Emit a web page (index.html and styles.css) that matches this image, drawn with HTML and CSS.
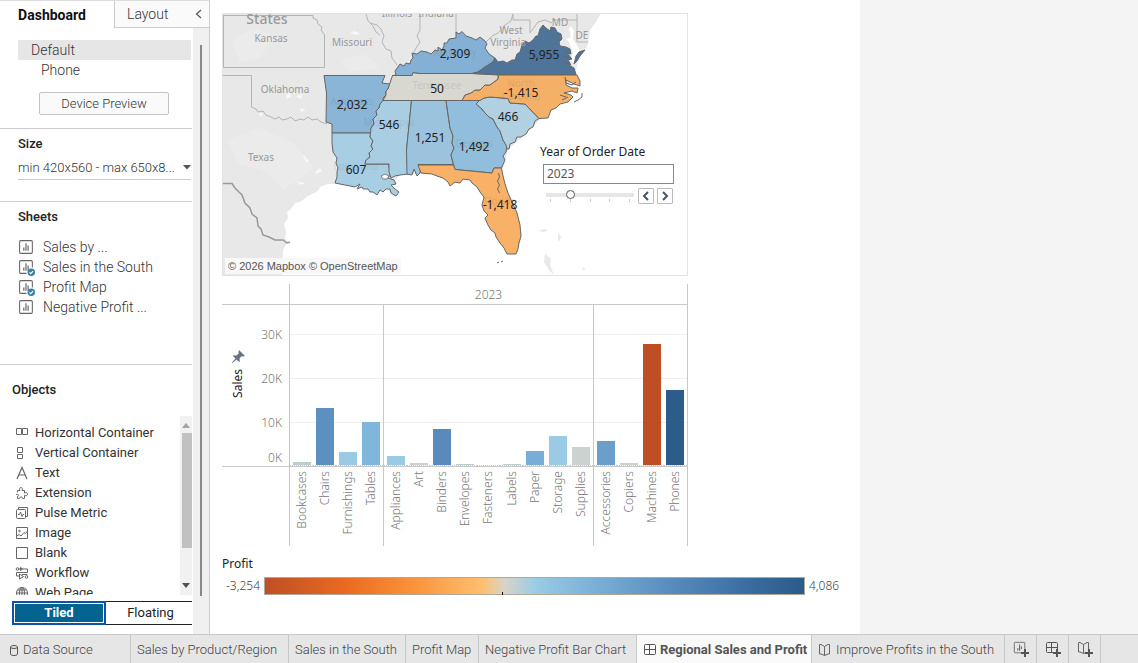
FILE: index.html
```html
<!DOCTYPE html>
<html lang="en">
<head>
  <meta charset="UTF-8">
  <meta name="viewport" content="width=device-width, initial-scale=1.0">
  <title>Regional Sales and Profit</title>
  <link rel="stylesheet" href="styles.css">
</head>
<body>
  <!-- shared icons -->
  <svg class="sprite" aria-hidden="true">
    <symbol id="i-sheet" viewBox="0 0 16 16">
      <rect x="1.5" y="1.5" width="12" height="12" rx="1" fill="none" stroke="#666"/>
      <path d="M5.5 11V8M7.5 11V4M9.5 11V6" stroke="#555" fill="none"/>
    </symbol>
    <symbol id="i-used" viewBox="0 0 16 16">
      <path d="M8 13.5H2.5a1 1 0 0 1-1-1v-10a1 1 0 0 1 1-1h10a1 1 0 0 1 1 1V8" fill="none" stroke="#666"/>
      <path d="M5.5 11V8M7.5 11V4M9.5 11V6" stroke="#555" fill="none"/>
      <circle cx="12.500" cy="12.500" r="3.500" fill="#3a81a6"/>
      <path d="M10.800 12.600l1.200 1.200 2.200-2.400" stroke="#fff" fill="none"/>
    </symbol>
    <symbol id="i-dash" viewBox="0 0 14 14">
      <rect x="1.5" y="1.5" width="11" height="10" rx="1" fill="none" stroke="#555"/>
      <path d="M6.5 1.5v10M1.5 6.5h11" stroke="#555" fill="none"/>
    </symbol>
    <symbol id="i-story" viewBox="0 0 14 14">
      <path d="M6.500 3.500L3 1.500H1.500v9.500H3l3.500 1.500 3.500-1.500h1.500V1.500H10L6.500 3.500v9" fill="none" stroke="#666"/>
    </symbol>
    <symbol id="i-plus" viewBox="0 0 8 8">
      <path d="M4 0v8M0 4h8" stroke="#555" stroke-width="2" fill="none"/>
    </symbol>
  </svg>

  <main class="workspace">
    <aside class="sidebar">
      <nav class="side-tabs">
        <button class="side-tab active" type="button">Dashboard</button>
        <div class="side-tab-rest">
          <button class="side-tab" type="button">Layout</button>
          <button class="collapse" type="button" aria-label="Collapse pane">
            <svg width="7" height="10" viewBox="0 0 7 10"><path d="M6 1L1.500 5 6 9" fill="none" stroke="#555" stroke-width="1.200"/></svg>
          </button>
        </div>
      </nav>
      <div class="side-body">
        <div class="side-content">
          <section class="devices">
            <a class="device selected" href="#default">Default</a>
            <a class="device phone" href="#phone">Phone</a>
            <button class="preview" type="button">Device Preview</button>
          </section>
          <section class="size">
            <label class="side-title" for="size">Size</label>
            <div class="size-field">
              <select id="size">
                <option>min 420x560 - max 650x8...</option>
              </select>
              <svg width="8" height="5" viewBox="0 0 8 5"><path d="M0 0h8L4 4.500z" fill="#555"/></svg>
            </div>
          </section>
          <section class="sheets">
            <h2 class="side-title">Sheets</h2>
            <ul>
              <li><svg><use href="#i-sheet"/></svg>Sales by ...</li>
              <li><svg><use href="#i-used"/></svg>Sales in the South</li>
              <li><svg><use href="#i-used"/></svg>Profit Map</li>
              <li><svg><use href="#i-sheet"/></svg>Negative Profit ...</li>
            </ul>
          </section>
          <section class="objects">
            <h2 class="side-title">Objects</h2>
            <div class="object-box">
              <ul>
                <li><svg viewBox="0 0 14 14"><path d="M1.500 2.500h5v6h-5zM7.500 2.500h5v6h-5z"/></svg>Horizontal Container</li>
                <li><svg viewBox="0 0 14 14"><path d="M2.500 1.500h5v5h-5zM2.500 8.500h5v4h-5z"/></svg>Vertical Container</li>
                <li><svg viewBox="0 0 14 14"><path d="M2 13L7 1.500 12 13M4 9h6" stroke-width="1.200"/></svg>Text</li>
                <li><svg viewBox="0 0 14 14"><path d="M2.500 6.500V4.500H5C4 2.500 5 1.500 6 1.500s2 1 1 3h2.500V7c2-1 3 0 3 1.200s-1 2-3 1.200v3H7.500c0-2-3-2-3 0h-2v-2c1.500 0 1.500-2 0-2H1"/></svg>Extension</li>
                <li><svg viewBox="0 0 14 14"><path d="M3.500 3V1.500h9v9H11"/><rect x="1.500" y="3.500" width="9" height="9" rx="1"/><path d="M3 8.500h1.500L5.500 6l1.500 4.500 1-2h1"/></svg>Pulse Metric</li>
                <li><svg viewBox="0 0 14 14"><path d="M1.500 1.500h11v11h-11zM2 10l2-1.500 2 1.500 3-3.500 1.500 1L12.500 5"/><circle cx="4.500" cy="5" r=".8"/></svg>Image</li>
                <li><svg viewBox="0 0 14 14"><path d="M1.500 1.500h11v11h-11z"/></svg>Blank</li>
                <li><svg viewBox="0 0 14 14"><circle cx="2.500" cy="3" r="1.300"/><circle cx="11.500" cy="11" r="1.300"/><path d="M4 3h8.500v3.500h-11V10h3M5.500 1.500v3l2-1.500zM7 8.500h5v1M4.500 8v5l4-2.500z"/></svg>Workflow</li>
                <li><svg viewBox="0 0 14 14"><circle cx="7" cy="7" r="5.500"/><ellipse cx="7" cy="7" rx="2.500" ry="5.500"/><path d="M1.500 7h11M2.500 4h9M7 1.500v11"/></svg>Web Page</li>
              </ul>
              <div class="scroller">
                <svg width="8" height="5" viewBox="0 0 8 5"><path d="M0 5h8L4 0z" fill="#a3a3a3"/></svg>
                <div class="scroller-thumb"></div>
                <svg width="8" height="5" viewBox="0 0 8 5"><path d="M0 0h8L4 5z" fill="#505050"/></svg>
              </div>
            </div>
            <div class="mode">
              <button class="mode-tiled" type="button">Tiled</button>
              <button class="mode-float" type="button">Floating</button>
            </div>
          </section>
        </div>
        <div class="side-scroll"><div class="side-thumb"></div></div>
      </div>
    </aside>

    <div class="dashboard">
      <section class="map">
        <svg class="map-drawing" viewBox="223 14 464 261" role="img" aria-label="Profit map of the South">
          <!-- land -->
          <path fill="#e8e8e8" d="M222 13H601L596 22 590 30 589 38 587 47 580 54 575 74 560 100 540 120 508 150 503 168 420 174 400 175 391 185 335 184 328 184 320 187 318 191 308 196 300 202 295 203 291 209 287 212 288 218 284 224 286 232 285 238 288 241 283 250 282 276H222z"/>
          <path fill="#fff" d="M571 26l3 5-1 8 5 8 2 4-6 12-4-2 3-9-4-10-3-3 5-2-2-8z"/>
          <path fill="#ebebeb" d="M232 40l22-12 20 8-14 22-20 4zM228 140l30-12 34 14 22 26-30 22-20-20-26-6zM340 60l24-6 16 14-30 4z"/>
          <path fill="#f7f7f7" d="M286 95l4-2 1 4-4 2zM296 96l7-2-2 5zM258 112l5 2-2 3zM300 108l6 2-5 2zM350 33l5-2 5 3-4 1zM304 155l5 6-2 2-4-6zM296 181l9 2-4 2zM315 172l5-4 2 3-6 3z"/>
          <path fill="#e9e9e9" d="M539 230l6-1 3 2-6 1zM558 232l3 5-2 5-1-2zM545 254l6 5-1 6 4 10-5-5-5-8zM582 267l4 2-3 1z"/>
          <!-- neighbour borders -->
          <g class="border">
            <path d="M223.500 15V67.500H324.500V35L321 30 322 27 318 24 317 20 313 18 313 15.500H223.500M223 75.500H251.500V107L256 109 258 112 263 111 266 115 271 117 275 119 279 117 282 120 287 119 291 117 295 121 300 119 304 120 308 117 312 120 317 119 321 122 327 124"/>
            <path class="nation" d="M223 183.500H232L235 188 239 192 242 195 245 203 250 208 252 214 257 218 258 226 261 229 263 235 269 237 275 240 283 240 287 243 290 242"/>
            <path d="M366 14L368 21 373 26 376 32 380 35M370 23L377 25 381 29 384 36 382 42 386 49 391 51 392 58 395 62 397 65M420 14V30L417 36 420 42 416 48 413 54M456 14V33M486 42L492 36 498 33 505 25 511 21 513 14M513 14V20H530L530 33 538 22 545 20 552 23M552 20H577V14M577 20V42H588"/>
          </g>
          <!-- states -->
          <g class="states">
            <path fill="#8ab5d7" d="M324 75.500H385L382 83 390 84 388 89 386 91 386 95 383 98 383 101 380 104 379 108 376 111 377 115 373 119 374 124 371 128 372 133H332V124L326 122 326.500 93z"/>
            <path fill="#a8cee4" d="M332 133H371L370 137 373 141 371 146 373 149 369 153 370 157 366 160 365 164H389V168L391 174 388 178 394 180 396 184 391 185 395 189 399 192 396 196 391 193 390 189 386 189 383 192 380 190 377 195 373 192 370 192 368 189 363 189 362 187 357 189 360 184 355 187 345 185 335 183 337 177 337 172 338 168 336 163 337 158 333 152 332 143z"/>
            <path fill="#a9cee4" d="M383 100.500H411.500L406.500 150 408 174 400 175 395 176 391 178 389 172V164H365L366 160 370 157 369 153 373 149 371 146 373 141 370 137 371 128 374 124 373 119 377 115 376 111 379 108 380 104z"/>
            <path fill="#9bc3de" d="M411.500 100.500H446L450 128 453 136 452 143 454 148 451 155 453.500 164.500H418L421 168 420 173 417 176 414 169 412 175 407 174 406.500 150z"/>
            <path fill="#91bedd" d="M446 100.500H480L476 104 482 109 485 113 489 117 493 119 497 127 500 131 503 140 507 146 506 152 503 156 505 160 501.500 168H494L492 173 455 169.500 453.500 164.500 451 155 454 148 452 143 453 136 450 128z"/>
            <path fill="#b1d0e2" d="M480 100L484 98 490 97 508 98.500 510 103 525 104 539 118.500 535 121 533 127 529 129 526 134 521 137 517 137 515 142 510 144 509 149 507 149 506 145 503 140 500 131 497 127 493 119 489 117 485 113 482 109 476 104z"/>
            <path fill="#f5b067" d="M498 75H577L580 81 580 86 574 84 566 80 566 85 572 88 578 88 577 93 572 91 564 93 571 95 573 97 568 102 560 104 556 108 551 110 548 118 539 118.500 525 104 510 103 508 98.500 490 97 484 98 480 100.500H462L465 95 471 93 475 90 480 90 485 85 490 85 498 79z"/>
            <path fill="#d8d8d0" d="M392.500 75.500H412L413 72.500 420 73.500H472L498 75V79L490 85 485 85 480 90 475 90 471 93 465 95 462 100.500H383L386 95 386 91 388 89z"/>
            <path fill="#84b0d5" d="M392.500 75.500L396 75 395 71 400 64 404 66 406 63 410 64 411 60 413 58 412 53 417 54 421 51 427 52 431 54 435 50 438 51 438 47 442 50 444 46 444 43 447 43 449 39 456 38 456 32 459 34 462 31.500 466 36 472 38 476 40 480 37 485 41 487 44 485 48 489 54 495 58 493 62 485 67 478 72 472 73.500H420L413 72.500 412 75.500z"/>
            <path fill="#4e749a" d="M495 58L498 62 503 61 507 63 512 60 515 60 517 54 520 52 522 45 525 41 529 43 533 40 536 36 538 36 540 29 543 25 546 28 550 31 551 27 555 28 557 32 561 34 562 39 559 42 560 46 566 47 570 49 571 54 567 53 572 59 568 60 571 65 567 64 574 68 576 74.500H498L472 73.500 478 72 485 67 493 62z"/>
            <path fill="#4e749a" d="M585 50L579 52 576 56 574 64 577 61 580 56z"/>
            <path fill="#f8b166" d="M418 165H453.500L455 169.500 492 173 494 168H501.500L503 176 505 184 508 193 512 202 517 213 520 225 521 236 519 243 518 249 516 254 507 254 504 248 500 243 496 237 495 233 491 230 488 225 485 218 488 215 484 211 482 205 484 197 480 192 477 187 472 183 470 180 463 179 460 183 455 182 450 186 448 182 443 178 437 176 432 174 421 173z"/>
            <path class="line" d="M498.500 173l1 4-2 4 2 4-2 4 2 4M497 263l2-1M501 262l2-1M582 93v4l-4 3-4 2M565 77l1 6 6 2 4-3M560 95l6 2M562 100l6-3M564 56l5 3M562 62l7 2M565 51l5 3"/>
          </g>
          <path fill="#fff" stroke="#666" stroke-width=".800" d="M381 176l4-2 4 2-2 3-4 0z"/>
          <!-- place names -->
          <g class="place">
            <text class="country" x="267" y="24">States</text>
            <text x="271" y="42">Kansas</text>
            <text x="352" y="46">Missouri</text>
            <text x="285" y="93">Oklahoma</text>
            <text x="261" y="161">Texas</text>
            <text x="397" y="17">Illinois</text>
            <text x="436" y="17">Indiana</text>
            <text x="511" y="34">West</text>
            <text x="508" y="46">Virginia</text>
            <text x="560" y="26">MD</text>
            <text x="582" y="39">DE</text>
          </g>
          <g class="place faint">
            <text x="352" y="105">Arkansas</text>
            <text x="389" y="126">Mississippi</text>
            <text x="356" y="170">Louisiana</text>
            <text x="437" y="89">Tennessee</text>
            <text x="455" y="56">Kentucky</text>
            <text x="521" y="87">North</text>
            <text x="521" y="100">Carolina</text>
            <text x="474" y="147">Georgia</text>
            <text x="500" y="205">Florida</text>
          </g>
          <!-- profit values -->
          <g class="value">
            <text x="455" y="58">2,309</text>
            <text x="544" y="59">5,955</text>
            <text x="437" y="93">50</text>
            <text x="521" y="97">-1,415</text>
            <text x="352" y="109">2,032</text>
            <text x="389" y="129">546</text>
            <text x="508" y="121">466</text>
            <text x="430" y="142">1,251</text>
            <text x="474" y="151">1,492</text>
            <text x="356" y="174">607</text>
            <text x="500" y="209">-1,418</text>
          </g>
        </svg>
        <div class="credit"><a href="#mapbox">© 2026 Mapbox</a> <a href="#osm">© OpenStreetMap</a></div>
        <div class="year">
          <label for="year">Year of Order Date</label>
          <input id="year" class="year-text" type="text" value="2023">
          <div class="year-row">
            <div class="year-slider">
              <input type="range" min="2022" max="2026" value="2023" aria-label="Year">
              <div class="ticks"><i></i><i></i><i></i><i></i><i></i></div>
            </div>
            <button type="button" aria-label="Previous"><svg width="8" height="10" viewBox="0 0 8 10"><path d="M6 1L2 5l4 4" fill="none" stroke="#44546a" stroke-width="2"/></svg></button>
            <button type="button" aria-label="Next"><svg width="8" height="10" viewBox="0 0 8 10"><path d="M2 1l4 4-4 4" fill="none" stroke="#44546a" stroke-width="2"/></svg></button>
          </div>
        </div>
      </section>

      <section class="chart">
        <div class="chart-year">2023</div>
        <div class="axis">
          <div class="axis-title">
            <svg width="13" height="13" viewBox="0 0 13 13"><path d="M7 0l6 6-2 .5-1.500-.2L7.500 8.500 7.800 12 6.500 11.500 4.500 9.500.5 13 0 12.500 3.500 8.500 1.500 6.500 1 5.200l3.500.3 2.200-2L6.500 2z" fill="#66727f"/></svg>
            <span>Sales</span>
          </div>
          <div class="axis-ticks"><span>30K</span><span>20K</span><span>10K</span><span>0K</span></div>
        </div>
        <div class="panes">
          <div class="pane furniture">
            <div class="col"><div class="plot"><i class="c-gray2" style="height:3px"></i></div><span>Bookcases</span></div>
            <div class="col"><div class="plot"><i class="c-blue4" style="height:57px"></i></div><span>Chairs</span></div>
            <div class="col"><div class="plot"><i class="c-blue1" style="height:13px"></i></div><span>Furnishings</span></div>
            <div class="col"><div class="plot"><i class="c-blue2" style="height:43px"></i></div><span>Tables</span></div>
          </div>
          <div class="pane office">
            <div class="col"><div class="plot"><i class="c-blue1" style="height:9px"></i></div><span>Appliances</span></div>
            <div class="col"><div class="plot"><i class="c-gray" style="height:2px"></i></div><span>Art</span></div>
            <div class="col"><div class="plot"><i class="c-blue5" style="height:36px"></i></div><span>Binders</span></div>
            <div class="col"><div class="plot"><i class="c-gray2" style="height:1px"></i></div><span>Envelopes</span></div>
            <div class="col"><div class="plot"><i class="c-gray" style="height:0px"></i></div><span>Fasteners</span></div>
            <div class="col"><div class="plot"><i class="c-gray2" style="height:1px"></i></div><span>Labels</span></div>
            <div class="col"><div class="plot"><i class="c-blue3" style="height:14px"></i></div><span>Paper</span></div>
            <div class="col"><div class="plot"><i class="c-blue1" style="height:29px"></i></div><span>Storage</span></div>
            <div class="col"><div class="plot"><i class="c-gray" style="height:18px"></i></div><span>Supplies</span></div>
          </div>
          <div class="pane tech">
            <div class="col"><div class="plot"><i class="c-blue35" style="height:24px"></i></div><span>Accessories</span></div>
            <div class="col"><div class="plot"><i class="c-gray" style="height:2px"></i></div><span>Copiers</span></div>
            <div class="col"><div class="plot"><i class="c-red" style="height:121px"></i></div><span>Machines</span></div>
            <div class="col"><div class="plot"><i class="c-blue6" style="height:75px"></i></div><span>Phones</span></div>
          </div>
        </div>
      </section>

      <section class="legend">
        <h2>Profit</h2>
        <div class="legend-row">
          <span>-3,254</span>
          <div class="ramp"><i></i></div>
          <span>4,086</span>
        </div>
      </section>
    </div>
  </main>

  <nav class="sheet-tabs">
    <a class="tab source" href="#source"><svg width="10" height="13" viewBox="0 0 10 13"><ellipse cx="5" cy="3" rx="3.500" ry="1.500" fill="none" stroke="#555"/><path d="M1.500 3v7c0 2 7 2 7 0V3" fill="none" stroke="#555"/></svg>Data Source</a>
    <a class="tab wide" href="#s1">Sales by Product/Region</a>
    <a class="tab mid" href="#s2">Sales in the South</a>
    <a class="tab short" href="#s3">Profit Map</a>
    <a class="tab wide" href="#s4">Negative Profit Bar Chart</a>
    <a class="tab current" href="#s5"><svg width="14" height="14"><use href="#i-dash"/></svg>Regional Sales and Profit</a>
    <a class="tab story" href="#s6"><svg width="14" height="14"><use href="#i-story"/></svg>Improve Profits in the South</a>
    <button class="new" type="button" aria-label="New worksheet"><svg width="18" height="18" viewBox="0 0 18 18"><use href="#i-sheet" x="1" y="1" width="14" height="14"/><path d="M9 9h9v9H9z" fill="#e6e6e6"/><use href="#i-plus" x="9" y="9" width="8" height="8"/></svg></button>
    <button class="new" type="button" aria-label="New dashboard"><svg width="18" height="18" viewBox="0 0 18 18"><use href="#i-dash" x="1" y="1" width="14" height="14"/><path d="M9 9h9v9H9z" fill="#e6e6e6"/><use href="#i-plus" x="9" y="9" width="8" height="8"/></svg></button>
    <button class="new" type="button" aria-label="New story"><svg width="18" height="18" viewBox="0 0 18 18"><use href="#i-story" x="1" y="1" width="14" height="14"/><path d="M9 9h9v9H9z" fill="#e6e6e6"/><use href="#i-plus" x="9" y="9" width="8" height="8"/></svg></button>
  </nav>
</body>
</html>
```
FILE: styles.css
```css
* {
  box-sizing: border-box;
}
body {
  margin: 0;
  min-height: 100vh;
  display: flex;
  flex-direction: column;
  background: #f4f4f4;
  color: #333;
  font-family: Roboto, "Liberation Sans", sans-serif;
  font-size: 13px;
  font-weight: 300;
  line-height: 20px;
}
button, input, select {
  font: inherit;
  color: inherit;
  margin: 0;
  padding: 0;
}
button {
  border: 0;
  background: none;
}
a {
  color: inherit;
  text-decoration: none;
}
ul {
  list-style: none;
  margin: 0;
  padding: 0;
}
h2 {
  margin: 0;
}
.sprite {
  display: none;
}
.workspace {
  flex: 1;
  display: flex;
}

/* left pane */
.sidebar {
  flex: none;
  width: 210px;
  display: flex;
  flex-direction: column;
  background: #fff;
  border-right: 1px solid #ccc;
  border-top: 1px solid #ddd;
}
.side-tabs {
  display: flex;
  height: 27px;
  font-size: 14px;
}
.side-tab.active {
  width: 114px;
  padding-right: 10px;
  font-weight: 700;
  color: #111;
}
.side-tab-rest {
  flex: 1;
  display: flex;
  justify-content: space-between;
  padding: 0 7px 0 12px;
  background: #fafafa;
  border-left: 1px solid #ccc;
  border-bottom: 1px solid #ccc;
}
.collapse {
  display: flex;
  align-items: center;
}
.side-body {
  flex: 1;
  display: flex;
}
.side-content {
  flex: 1;
  min-width: 0;
  display: flex;
  flex-direction: column;
}
.side-content section {
  border-bottom: 1px solid #ccc;
}
.side-scroll {
  width: 16px;
  margin-left: 1px;
  padding: 17px 0 38px 7px;
  display: flex;
  background: #f0f0f0;
}
.side-thumb {
  width: 2px;
  background: #888;
}
.side-title {
  display: block;
  font-size: 13px;
  font-weight: 500;
  color: #222;
}
.devices {
  display: flex;
  flex-direction: column;
  height: 101px;
  padding: 12px 1px 0 18px;
  font-size: 14px;
}
.device {
  padding-left: 13px;
}
.device.phone {
  padding-left: 23px;
}
.selected {
  background: #e6e6e6;
}
.preview {
  align-self: flex-start;
  width: 130px;
  height: 23px;
  margin: 12px 0 0 21px;
  background: #fafafa;
  border: 1px solid #c4c4c4;
  border-radius: 2px;
  font-size: 13px;
}
.size {
  height: 73px;
  padding: 5px 1px 0 18px;
}
.size-field {
  display: flex;
  align-items: center;
  margin-top: 2px;
  border-bottom: 1px solid #ccc;
}
.size-field select {
  flex: 1;
  min-width: 0;
  height: 23px;
  appearance: none;
  border: 0;
  background: none;
}
.sheets {
  height: 163px;
  padding: 5px 0 0 18px;
}
.sheets ul {
  margin-top: 10px;
  font-size: 14px;
}
.sheets li {
  display: flex;
  align-items: center;
  height: 20px;
  gap: 8px;
}
.sheets svg {
  width: 17px;
  height: 17px;
}
.side-content .objects {
  flex: 1;
  border-bottom: 0;
  padding: 15px 0 0 12px;
}
.object-box {
  display: flex;
  justify-content: space-between;
  height: 179px;
  margin-top: 16px;
  overflow: hidden;
}
.object-box ul {
  padding: 7px 0 0 3px;
}
.object-box li {
  display: flex;
  align-items: center;
  gap: 6px;
  height: 20px;
  font-weight: 400;
  color: #333;
}
.object-box li svg {
  width: 14px;
  height: 14px;
  fill: none;
  stroke: #666;
}
.scroller {
  width: 12px;
  display: flex;
  flex-direction: column;
  align-items: center;
  padding: 7px 0;
  background: #f1f1f1;
}
.scroller-thumb {
  width: 10px;
  height: 115px;
  margin: 5px 0 auto 2px;
  background: #c1c1c1;
}
.mode {
  display: flex;
  margin-top: 6px;
}
.mode-tiled {
  width: 94px;
  height: 24px;
  background: #04638f;
  border: 2px solid #0b53a8;
  box-shadow: inset 0 0 0 1px #fff;
  color: #fff;
  font-weight: 700;
}
.mode-float {
  flex: 1;
  height: 24px;
  padding-left: 3px;
  border: 1px solid #222;
  border-width: 1px 0;
  color: #222;
  font-weight: 400;
}

/* dashboard */
.dashboard {
  flex: 1;
  max-width: 650px;
  padding: 13px 12px 0;
  background: #fff;
}
.map {
  position: relative;
  max-width: 466px;
  border: 1px solid #e2e2e2;
}
.map-drawing {
  display: block;
  width: 100%;
}
.border path {
  fill: none;
  stroke: #b4b4b4;
}
.border .nation {
  stroke: #999;
  stroke-width: 1.5;
}
.states path {
  stroke: #666;
  stroke-width: 1;
  stroke-linejoin: round;
}
.states .line {
  fill: none;
}
.place, .value {
  text-anchor: middle;
  font-family: "Noto Sans", sans-serif;
  font-weight: 400;
}
.place {
  font-size: 10px;
  fill: #999;
}
.country {
  font-size: 14px;
  font-weight: 500;
}
.place.faint {
  fill: #555;
  opacity: .12;
}
.value {
  font-size: 12px;
  fill: #222;
}
.credit {
  position: absolute;
  left: 2px;
  bottom: 1px;
  padding: 0 3px;
  background: #f8f8f8;
  color: #555;
  font: 11px/16px "Liberation Sans", sans-serif;
}
.year {
  position: absolute;
  left: 317px;
  top: 128px;
  width: 134px;
  font-family: "Noto Sans", sans-serif;
  font-size: 12px;
  font-weight: 400;
}
.year label {
  display: block;
  color: #222;
}
.year-text {
  display: block;
  width: 131px;
  height: 20px;
  margin: 2px 0 0 3px;
  padding: 0 3px;
  border: 1px solid #888;
  color: #555;
}
.year-row {
  display: flex;
  align-items: center;
  gap: 3px;
  margin: 4px 0 0 6px;
}
.year-slider {
  width: 88px;
  margin-right: 1px;
}
.year-slider input {
  display: block;
  appearance: none;
  width: 100%;
  height: 9px;
  background: linear-gradient(#e6e6e6, #e6e6e6) center / 100% 4px no-repeat;
}
.year-slider input::-webkit-slider-thumb {
  appearance: none;
  width: 9px;
  height: 9px;
  border: 1px solid #555;
  border-radius: 50%;
  background: #fff;
}
.ticks {
  display: flex;
  justify-content: space-between;
  padding: 0 4px;
}
.ticks i {
  width: 1px;
  height: 3px;
  background: #ccc;
}
.year-row button {
  display: flex;
  align-items: center;
  justify-content: center;
  width: 16px;
  height: 16px;
  border: 1px solid #bbb;
  border-radius: 1px;
}

/* bar chart */
.chart {
  max-width: 466px;
  margin-top: 8px;
  display: grid;
  grid-template-columns: 67px 1fr;
  grid-template-rows: 20px 242px;
  color: #777;
  font-family: "Noto Sans", sans-serif;
  font-size: 12px;
}
.chart-year {
  grid-column: 2;
  border: 1px solid #c8c8c8;
  border-width: 0 1px 0 1px;
  text-align: center;
  line-height: 22px;
}
.axis {
  display: flex;
  justify-content: space-between;
  height: 163px;
  border: 1px solid #c8c8c8;
  border-width: 1px 0;
}
.axis-title {
  display: flex;
  flex-direction: column;
  align-items: center;
  gap: 6px;
  padding: 45px 0 0 6px;
  font-weight: 400;
  color: #222;
}
.axis-title span, .col span {
  writing-mode: vertical-rl;
  transform: rotate(180deg);
}
.axis-ticks {
  display: flex;
  flex-direction: column;
  gap: 24px;
  padding: 20px 7px 0 0;
  text-align: right;
}
.axis-ticks span:last-child {
  margin-top: -9px;
}
.panes {
  display: flex;
  border-right: 1px solid #c8c8c8;
}
.pane {
  display: flex;
  border-left: 1px solid #c8c8c8;
}
.furniture, .tech {
  flex: 4;
}
.office {
  flex: 9;
}
.col {
  flex: 1;
  min-width: 0;
  display: flex;
  flex-direction: column;
  align-items: center;
}
.plot {
  width: 100%;
  height: 163px;
  padding-bottom: 1px;
  display: flex;
  align-items: flex-end;
  justify-content: center;
  border: 1px solid #c8c8c8;
  border-width: 1px 0;
  background:
    linear-gradient(#f0f0f0, #f0f0f0) 0 29px / 100% 1px no-repeat,
    linear-gradient(#f0f0f0, #f0f0f0) 0 73px / 100% 1px no-repeat,
    linear-gradient(#f0f0f0, #f0f0f0) 0 117px / 100% 1px no-repeat,
    repeating-linear-gradient(90deg, #ccc 0 1px, #fff 1px 2px) 0 100% / 100% 1px no-repeat;
}
.plot i {
  width: 18px;
}
.col span {
  margin-top: 4px;
  line-height: 16px;
}
.c-gray { background: #cbd2cf; }
.c-gray2 { background: #bccdd0; }
.c-blue1 { background: #9acae4; }
.c-blue2 { background: #81b6dc; }
.c-blue3 { background: #77add6; }
.c-blue35 { background: #6b9fcb; }
.c-blue4 { background: #5b90c0; }
.c-blue5 { background: #588bbb; }
.c-blue6 { background: #2b5c8a; }
.c-red { background: #bf4e24; }

/* colour legend */
.legend {
  margin-top: 8px;
  font-family: "Noto Sans", sans-serif;
  font-size: 12px;
  color: #444;
}
.legend h2 {
  font-size: 12px;
  font-weight: 400;
  color: #222;
}
.legend-row {
  display: flex;
  align-items: center;
  gap: 4px;
  padding: 2px 0 0 4px;
}
.ramp {
  flex: 1;
  max-width: 541px;
  height: 18px;
  display: flex;
  align-items: flex-end;
  border: 1px solid #b0a999;
  background: linear-gradient(90deg, #bf4f25, #ea6a21 15%, #f98e35 26%, #ffbe6d 40%, #d8d4c9 44.5%, #9bcce5 50%, #78aed6 62%, #5b8fc0 74%, #3b6ea1 89%, #2a5c8a);
}
.ramp i {
  width: 1px;
  height: 3px;
  margin: 0 0 -1px 44%;
  background: #000;
}

/* bottom tabs */
.sheet-tabs {
  display: flex;
  height: 29px;
  background: #e6e6e6;
  border-top: 1px solid #c8c8c8;
  color: #444;
  white-space: nowrap;
}
.tab, .new {
  flex: none;
  display: flex;
  align-items: center;
  border-right: 1px solid #c8c8c8;
}
.tab {
  gap: 4px;
  padding: 2px 0 0 6px;
}
.source {
  width: 131px;
  padding-left: 9px;
}
.wide {
  width: 158px;
}
.mid {
  width: 117px;
}
.short {
  width: 73px;
}
.current {
  width: 175px;
  gap: 3px;
  background: #fafafa;
  color: #555;
  font-weight: 700;
}
.story {
  width: 193px;
}
.new {
  width: 32px;
  justify-content: center;
}
```
